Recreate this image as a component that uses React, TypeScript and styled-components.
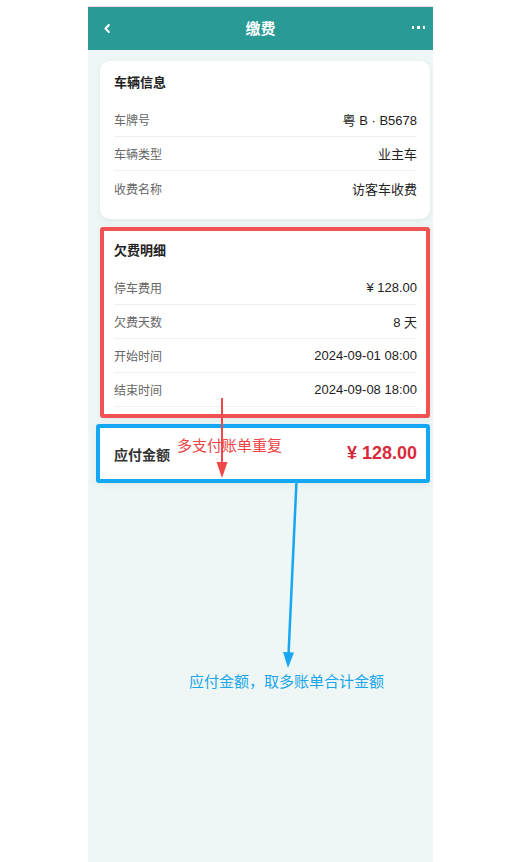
import React from "react";
import styled, { createGlobalStyle } from "styled-components";

const GlobalStyle = createGlobalStyle`
  html, body {
    margin: 0;
    padding: 0;
    background: #ffffff;
  }
  body {
    font-family: "Liberation Sans", "Noto Sans CJK SC", sans-serif;
  }
  * {
    box-sizing: border-box;
  }
`;

const Phone = styled.div`
  position: relative;
  margin: 6px 0 0 88px;
  width: 345px;
  min-height: 856px;
  background: #eff7f6;
  border-top: 1px solid #f1dbe6;
`;

const Header = styled.header`
  height: 43px;
  background: #2a9a96;
  display: grid;
  grid-template-columns: 60px 1fr 60px;
  align-items: center;
  color: #fff;
`;

const BackButton = styled.div`
  padding-left: 16px;
  display: flex;
  align-items: center;
`;

const Title = styled.h1`
  margin: 0;
  text-align: center;
  font-size: 15px;
  font-weight: 700;
  line-height: 20px;
`;

const More = styled.div`
  display: flex;
  justify-content: flex-end;
  gap: 3px;
  padding-right: 8px;
  margin-top: -2px;
  span {
    width: 2.5px;
    height: 2.5px;
    background: #fff;
  }
`;

const Body = styled.main`
  display: flex;
  flex-direction: column;
  padding-top: 11px;
`;

const Card = styled.section<{ $border?: string; $mt?: number; $ml?: number }>`
  margin: ${(p) => p.$mt ?? 0}px 3px 0 ${(p) => p.$ml ?? 12}px;
  background: #fff;
  border-radius: ${(p) => (p.$border ? 3 : 10)}px;
  border: ${(p) => (p.$border ? `4px solid ${p.$border}` : "none")};
  box-shadow: 0 2px 6px rgba(40, 90, 80, 0.08);
`;

const CardInner = styled.div<{ $pl: number; $pr: number; $pb: number }>`
  padding: 0 ${(p) => p.$pr}px ${(p) => p.$pb}px ${(p) => p.$pl}px;
`;

const CardTitle = styled.h2<{ $pt: number }>`
  margin: 0;
  padding: ${(p) => p.$pt}px 0 10px;
  font-size: 13px;
  font-weight: 700;
  line-height: 20px;
  color: #222;
`;

const Row = styled.div<{ $divider: boolean }>`
  height: 34px;
  display: flex;
  align-items: center;
  justify-content: space-between;
  border-bottom: ${(p) => (p.$divider ? "1px solid #f0f0f0" : "none")};
`;

const Label = styled.span`
  font-size: 12px;
  color: #666;
`;

const Value = styled.span`
  font-size: 13px;
  color: #222;
`;

const TotalCard = styled.div`
  height: 51px;
  display: flex;
  align-items: center;
  justify-content: space-between;
  padding: 0 9px 0 14px;
`;

const TotalLabel = styled.span`
  font-size: 14px;
  font-weight: 700;
  color: #333;
`;

const TotalValue = styled.span`
  font-size: 18px;
  font-weight: 700;
  color: #d92b3c;
`;

const Arrows = styled.svg`
  position: absolute;
  left: 0;
  top: 0;
  pointer-events: none;
`;

const Note = styled.div<{ $color: string; $x: number; $y: number }>`
  position: absolute;
  left: ${(p) => p.$x}px;
  top: ${(p) => p.$y}px;
  font-size: 15px;
  line-height: 20px;
  color: ${(p) => p.$color};
  white-space: nowrap;
`;

type Item = { label: string; value: string };

const vehicle: Item[] = [
  { label: "车牌号", value: "粤 B · B5678" },
  { label: "车辆类型", value: "业主车" },
  { label: "收费名称", value: "访客车收费" },
];

const arrears: Item[] = [
  { label: "停车费用", value: "¥ 128.00" },
  { label: "欠费天数", value: "8 天" },
  { label: "开始时间", value: "2024-09-01 08:00" },
  { label: "结束时间", value: "2024-09-08 18:00" },
];

function Rows({ items, lastDivider }: { items: Item[]; lastDivider: boolean }) {
  return (
    <>
      {items.map((it, i) => (
        <Row key={it.label} $divider={lastDivider || i < items.length - 1}>
          <Label>{it.label}</Label>
          <Value>{it.value}</Value>
        </Row>
      ))}
    </>
  );
}

export default function App() {
  return (
    <>
      <GlobalStyle />
      <Phone>
        <Header>
          <BackButton>
            <svg width="6" height="9" viewBox="0 0 6 9">
              <path d="M4.8 1 L1.5 4.5 L4.8 8" fill="none" stroke="#fff" strokeWidth="2" strokeLinecap="round" strokeLinejoin="round" />
            </svg>
          </BackButton>
          <Title>缴费</Title>
          <More>
            <span />
            <span />
            <span />
          </More>
        </Header>

        <Body>
          <Card>
            <CardInner $pl={14} $pr={13} $pb={14}>
              <CardTitle $pt={12}>车辆信息</CardTitle>
              <Rows items={vehicle} lastDivider={false} />
            </CardInner>
          </Card>

          <Card $border="#f25252" $mt={8}>
            <CardInner $pl={10} $pr={9} $pb={7}>
              <CardTitle $pt={10}>欠费明细</CardTitle>
              <Rows items={arrears} lastDivider />
            </CardInner>
          </Card>

          <Card $border="#13a8f4" $mt={6} $ml={8}>
            <TotalCard>
              <TotalLabel>应付金额</TotalLabel>
              <TotalValue>¥ 128.00</TotalValue>
            </TotalCard>
          </Card>
        </Body>

        <Arrows width="345" height="700" viewBox="0 0 345 700">
          <line x1="134" y1="391" x2="134" y2="458" stroke="#f04848" strokeWidth="2" />
          <polygon points="128.5,455 139.5,455 134,471" fill="#f04848" />
          <line x1="208.5" y1="474" x2="200.5" y2="648" stroke="#16a6f2" strokeWidth="2.5" />
          <polygon points="195,645 206,645.5 200,661" fill="#16a6f2" />
        </Arrows>
        <Note $color="#ee4545" $x={89} $y={429}>多支付账单重复</Note>
        <Note $color="#1aa5ea" $x={101} $y={665}>应付金额，取多账单合计金额</Note>
      </Phone>
    </>
  );
}
